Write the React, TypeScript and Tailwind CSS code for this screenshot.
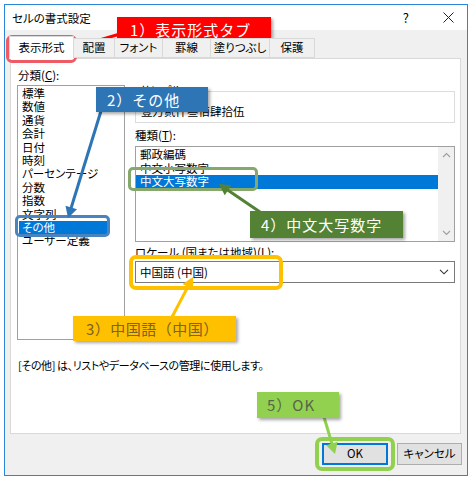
import React from "react";

function Arrow({ x1, y1, x2, y2, color, w = 3, hl = 11, hw = 6 }: { x1: number; y1: number; x2: number; y2: number; color: string; w?: number; hl?: number; hw?: number }) {
  const dx = x2 - x1;
  const dy = y2 - y1;
  const L = Math.hypot(dx, dy);
  const ux = dx / L;
  const uy = dy / L;
  const bx = x2 - ux * hl;
  const by = y2 - uy * hl;
  const px = -uy;
  const py = ux;
  const pts = `${x2},${y2} ${bx + px * hw},${by + py * hw} ${bx - px * hw},${by - py * hw}`;
  return (
    <g>
      <line x1={x1} y1={y1} x2={bx + ux * 1} y2={by + uy * 1} stroke={color} strokeWidth={w} />
      <polygon points={pts} fill={color} />
    </g>
  );
}

const categories = ["標準", "数値", "通貨", "会計", "日付", "時刻", "パーセンテージ", "分数", "指数", "文字列", "その他", "ユーザー定義"];

export default function App() {
  return (
    <div className="relative w-[472px] h-[478px] overflow-hidden bg-white text-black font-['Noto_Sans_CJK_JP',sans-serif] [font-feature-settings:'palt'] text-[11.5px]">
      <div className="pt-[4px] pl-[4px]">
        <div className="w-[464px] h-[472px] border border-[#2a86d8] bg-[#f0f0f0] flex flex-col">
          {/* title bar */}
          <div className="h-[25px] bg-white flex items-center pl-[7px] pr-[13px] shrink-0">
            <span className="leading-[14px]">セルの書式設定</span>
            <span className="ml-auto mr-[34px] text-[13px] leading-[14px]">?</span>
            <svg width="11" height="11" viewBox="0 0 11 11">
              <path d="M0.5 0.5 L10.5 10.5 M10.5 0.5 L0.5 10.5" stroke="#222" strokeWidth="1" />
            </svg>
          </div>
          {/* tabs */}
          <div className="pt-[6px] flex items-end ml-[4px] h-[28px] shrink-0 relative z-10">
            <div className="w-[65px] h-[23px] bg-white border border-[#d9d9d9] border-b-white flex items-center justify-center -mb-[1px]">
              表示形式
            </div>
            <div className="w-[41px] h-[20px] border border-[#d9d9d9] border-l-0 flex items-center justify-center bg-[#f0f0f0]">配置</div>
            <div className="w-[48px] h-[20px] border border-[#d9d9d9] border-l-0 flex items-center justify-center bg-[#f0f0f0]">フォント</div>
            <div className="w-[48px] h-[20px] border border-[#d9d9d9] border-l-0 flex items-center justify-center bg-[#f0f0f0]">罫線</div>
            <div className="w-[59px] h-[20px] border border-[#d9d9d9] border-l-0 flex items-center justify-center bg-[#f0f0f0]">塗りつぶし</div>
            <div className="w-[45px] h-[20px] border border-[#d9d9d9] border-l-0 flex items-center justify-center bg-[#f0f0f0]">保護</div>
          </div>
          {/* panel */}
          <div className="ml-[5px] w-[451px] h-[376px] bg-white border border-[#d9d9d9] flex flex-col pl-[6px] shrink-0">
            <div className="flex gap-[10px]">
              {/* left column */}
              <div className="w-[108px] flex flex-col pt-[9px]">
                <div className="h-[14px] leading-[14px] pl-[1px]">
                  分類(<span className="underline">C</span>):
                </div>
                <div className="mt-[3px] h-[255px] border border-[#a0a0a0] pt-[1px] flex flex-col">
                  {categories.map((c) => (
                    <div
                      key={c}
                      className={
                        c === "その他"
                          ? "h-[13.4px] leading-[13.4px] pl-[3px] w-[88px] ml-[1px] bg-[#0078d7] text-white"
                          : "h-[13.4px] leading-[13.4px] pl-[4px]"
                      }
                    >
                      {c}
                    </div>
                  ))}
                </div>
              </div>
              {/* right column */}
              <div className="w-[320px] flex flex-col pt-[32px]">
                <div className="relative h-[32px] border border-[#dcdcdc] pt-[12px] pl-[5px]">
                  <span className="absolute -top-[9px] left-[2px] bg-white px-[2px] leading-[14px]">サンプル</span>
                  <div className="leading-[14px]">壹万贰仟叁佰肆拾伍</div>
                </div>
                <div className="mt-[5px] h-[14px] leading-[14px]">
                  種類(<span className="underline">T</span>):
                </div>
                <div className="mt-[4px] h-[96px] border border-[#a0a0a0] flex">
                  <div className="flex-1 flex flex-col pt-[1px]">
                    <div className="h-[13.5px] leading-[13.5px] pl-[4px]">郵政編碼</div>
                    <div className="h-[13.5px] leading-[13.5px] pl-[4px]">中文小写数字</div>
                    <div className="h-[13.5px] leading-[13.5px] pl-[4px] bg-[#0078d7] text-white">中文大写数字</div>
                  </div>
                  <div className="w-[16px] bg-[#f0f0f0] flex flex-col items-center justify-between py-[5px]">
                    <svg width="9" height="6" viewBox="0 0 9 6">
                      <path d="M1 5 L4.5 1.5 L8 5" stroke="#a0a0a0" strokeWidth="1.2" fill="none" />
                    </svg>
                    <svg width="9" height="6" viewBox="0 0 9 6">
                      <path d="M1 1 L4.5 4.5 L8 1" stroke="#a0a0a0" strokeWidth="1.2" fill="none" />
                    </svg>
                  </div>
                </div>
                <div className="mt-[3px] h-[14px] leading-[14px]">
                  ロケール (国または地域)(<span className="underline">L</span>):
                </div>
                <div className="mt-[2px] h-[22px] border border-[#7a7a7a] flex items-center pl-[4px] pr-[5px]">
                  <span className="leading-[14px]">中国語 (中国)</span>
                  <svg className="ml-auto" width="10" height="6" viewBox="0 0 10 6">
                    <path d="M1 0.8 L5 4.8 L9 0.8" stroke="#333" strokeWidth="1.1" fill="none" />
                  </svg>
                </div>
              </div>
            </div>
            <div className="mt-[18px] h-[14px] leading-[14px] pl-[1px] text-[11px] tracking-[-0.4px]">[その他] は、リストやデータベースの管理に使用します。</div>
          </div>
          {/* buttons */}
          <div className="mt-[9px] flex justify-end gap-[9px] pr-[5px]">
            <div className="w-[66px] h-[22px] border-2 border-[#0078d7] bg-[#e1e1e1] flex items-center justify-center">OK</div>
            <div className="w-[65px] h-[22px] border border-[#adadad] bg-[#e1e1e1] flex items-center justify-center">キャンセル</div>
          </div>
        </div>
      </div>

      {/* annotations: outlines */}
      <div className="absolute left-[6px] top-[35px] w-[71px] h-[28px] border-[3px] border-[#ef5b64] rounded-[6px]" />
      <div className="absolute left-[15px] top-[215px] w-[95px] h-[22px] border-[3px] border-[#4a84c0] rounded-[5px]" />
      <div className="absolute left-[128px] top-[167px] w-[130px] h-[24px] border-[3px] border-[#86a86c] rounded-[5px]" />
      <div className="absolute left-[129px] top-[255px] w-[154px] h-[35px] border-[4px] border-[#ffc000] rounded-[7px]" />
      <div className="absolute left-[315px] top-[437px] w-[80px] h-[34px] border-[4px] border-[#92d050] rounded-[7px]" />

      {/* arrows */}
      <svg className="absolute left-0 top-0 pointer-events-none" width="472" height="478" viewBox="0 0 472 478">
        <Arrow x1={120} y1={34} x2={72} y2={48} color="#ff0000" />
        <Arrow x1={101} y1={111} x2={68} y2={218} color="#2e75b6" />
        <Arrow x1={260} y1={212} x2={219} y2={184} color="#548235" />
        <Arrow x1={172} y1={317} x2={193} y2={277} color="#ffc000" />
        <Arrow x1={324} y1={417} x2={335} y2={454} color="#92d050" />
      </svg>

      {/* annotation boxes */}
      <div className="absolute left-[117px] top-[17px] w-[154px] h-[25px] bg-[#ff0000] text-white text-[15px] leading-[25px] pl-[13px] tracking-[1px] [font-feature-settings:normal] shadow-[2px_2px_3px_rgba(0,0,0,0.35)] whitespace-nowrap overflow-hidden">
        1）表示形式タブ
      </div>
      <div className="absolute left-[96px] top-[87px] w-[112px] h-[25px] bg-[#2e75b6] text-white text-[15px] leading-[25px] pl-[11px] tracking-[1px] [font-feature-settings:normal] shadow-[2px_2px_3px_rgba(0,0,0,0.35)] whitespace-nowrap overflow-hidden">
        2）その他
      </div>
      <div className="absolute left-[250px] top-[211px] w-[153px] h-[27px] bg-[#548235] text-white text-[15px] leading-[27px] pl-[11px] tracking-[1px] [font-feature-settings:normal] shadow-[2px_2px_3px_rgba(0,0,0,0.35)] whitespace-nowrap overflow-hidden">
        4）中文大写数字
      </div>
      <div className="absolute left-[73px] top-[316px] w-[163px] h-[25px] bg-[#ffc000] text-[#7a6424] text-[15px] leading-[25px] pl-[13px] tracking-[0.5px] [font-feature-settings:normal] shadow-[2px_2px_3px_rgba(0,0,0,0.35)] whitespace-nowrap overflow-hidden">
        3）中国語（中国）
      </div>
      <div className="absolute left-[257px] top-[392px] w-[82px] h-[26px] bg-[#92d050] text-[#56654a] text-[15px] leading-[26px] pl-[10px] tracking-[1px] [font-feature-settings:normal] shadow-[2px_2px_3px_rgba(0,0,0,0.35)] whitespace-nowrap overflow-hidden">
        5）OK
      </div>
    </div>
  );
}
